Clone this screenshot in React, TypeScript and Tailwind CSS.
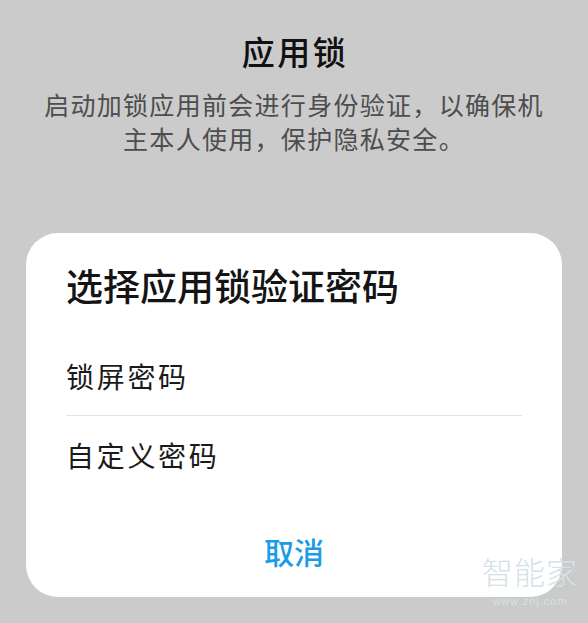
const cjk = { fontFamily: '"Noto Sans CJK SC", "Noto Sans", sans-serif' };

export default function App() {
  return (
    <div
      className="relative h-[623px] w-full overflow-hidden bg-[#cbcbcb] flex flex-col"
      style={cjk}
    >
      <div className="pt-[30px] text-center">
        <h1 className="text-[33px] leading-[42px] font-medium tracking-[2.5px] text-[#111] pl-[2px]">
          应用锁
        </h1>
        <p className="mt-[15px] text-[25px] leading-[34px] tracking-[1.3px] text-[#4d4d4d] px-[30px]">
          启动加锁应用前会进行身份验证，以确保机
          <br />
          主本人使用，保护隐私安全。
        </p>
      </div>

      <div className="mt-[78px] mx-[26px] h-[364px] rounded-[32px] bg-white px-[40px] pt-[30px] flex flex-col">
        <h2 className="text-[37px] leading-[44px] font-medium text-[#141414]">
          选择应用锁验证密码
        </h2>
        <div className="mt-[51px] text-[28px] leading-[36px] tracking-[2.7px] text-[#1a1a1a]">
          锁屏密码
        </div>
        <div className="mt-[21px] h-px bg-[#e3e3e3]" />
        <div className="mt-[21px] text-[28px] leading-[36px] tracking-[2.7px] text-[#1a1a1a]">
          自定义密码
        </div>
        <div className="mt-auto mb-[28px] text-center text-[30px] leading-[36px] font-medium text-[#1a9de6]">
          取消
        </div>
      </div>

      <div className="absolute right-[10px] bottom-[16px] flex flex-col items-center gap-[9px] text-[#d3e2e6] pointer-events-none">
        <span className="text-[31px] leading-[31px] tracking-[1px] font-light">智能家</span>
        <span className="text-[11px] leading-[12px] tracking-[1px]" style={{ fontFamily: '"Liberation Sans", sans-serif' }}>
          www.znj.com
        </span>
      </div>
    </div>
  );
}
